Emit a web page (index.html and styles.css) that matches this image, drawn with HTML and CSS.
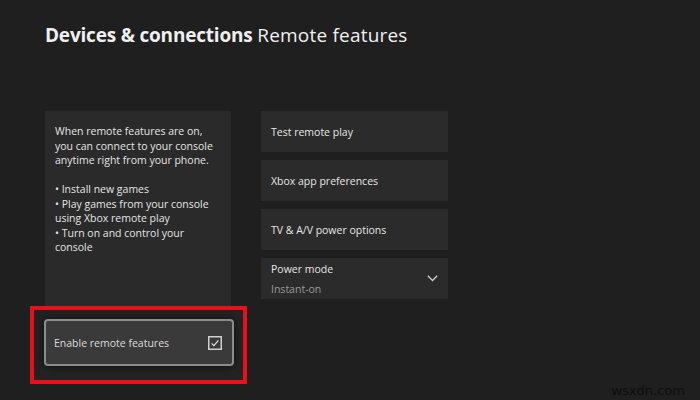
FILE: index.html
```html
<!DOCTYPE html>
<html>
<head>
<meta charset="utf-8">
<link rel="stylesheet" href="styles.css">
</head>
<body>
<div class="screen">
  <h1 class="title"><span class="title-main">Devices &amp; connections</span> <span class="title-sub">Remote features</span></h1>
  <div class="content">
    <div class="left">
      <div class="info">
        <p>When remote features are on, you can connect to your console anytime right from your phone.</p>
        <p class="gap">• Install new games<br>• Play games from your console using Xbox remote play<br>• Turn on and control your console</p>
      </div>
      <div class="highlight">
        <div class="enable">
          <span>Enable remote features</span>
          <span class="check">
            <svg width="14" height="14" viewBox="0 0 14 14"><rect x="0.75" y="0.75" width="12.5" height="12.5" fill="none" stroke="#cfcfcf" stroke-width="1.5"/><path d="M3.6 7.4 L5.9 9.6 L10.4 4.4" fill="none" stroke="#e0e0e0" stroke-width="1.3"/></svg>
          </span>
        </div>
      </div>
    </div>
    <div class="right">
      <div class="tile">Test remote play</div>
      <div class="tile">Xbox app preferences</div>
      <div class="tile">TV &amp; A/V power options</div>
      <div class="tile tile-select">
        <div class="sel-text">
          <div class="sel-label">Power mode</div>
          <div class="sel-value">Instant-on</div>
        </div>
        <svg class="chev" width="11" height="7" viewBox="0 0 11 7"><path d="M0.8 0.8 L5.5 5.5 L10.2 0.8" fill="none" stroke="#d0d0d0" stroke-width="1.3"/></svg>
      </div>
    </div>
  </div>
  <div class="watermark">wsxdn.com</div>
</div>
</body>
</html>
```
FILE: styles.css
```css
html, body {
  margin: 0;
  padding: 0;
  background: #1f1f1f;
}
.screen {
  width: 700px;
  height: 400px;
  overflow: hidden;
  position: relative;
  font-family: "Open Sans", "Noto Sans", sans-serif;
  color: #e6e6e6;
}
.title {
  margin: 25px 0 0 45px;
  font-size: 19px;
  line-height: 20px;
  font-weight: 400;
  color: #f0f0f0;
  letter-spacing: -0.2px;
}
.title-main {
  font-weight: 700;
}
.title-sub {
  letter-spacing: 0.2px;
}
.content {
  display: flex;
  gap: 30px;
  margin: 66px 0 0 45px;
}
.left {
  width: 186px;
  display: flex;
  flex-direction: column;
}
.info {
  background: #2a2a2a;
  height: 195px;
  padding: 13px 10px 0 10px;
  box-sizing: border-box;
  font-size: 10.5px;
  line-height: 14.5px;
  color: #e4e4e4;
}
.info p {
  margin: 0;
}
.info .gap {
  margin-top: 14.5px;
}
.highlight {
  margin: 0 -16px 0 -15px;
  border: 4px solid #e8101a;
  padding: 9px 9px 14px 10px;
  background: #232323;
}
.enable {
  height: 47px;
  box-sizing: border-box;
  border: 2px solid #8c8c8c;
  border-radius: 4px;
  background: #3a3a3a;
  display: flex;
  align-items: center;
  justify-content: space-between;
  padding: 0 10px 0 8px;
  font-size: 10.5px;
  color: #dcdcdc;
  box-shadow: 0 0 8px rgba(0,0,0,0.6);
}
.check {
  display: flex;
}
.right {
  width: 187px;
  display: flex;
  flex-direction: column;
  gap: 8px;
}
.tile {
  height: 41px;
  background: #2b2b2b;
  display: flex;
  align-items: center;
  padding: 0 10px;
  font-size: 10.5px;
  color: #e6e6e6;
}
.tile-select {
  justify-content: space-between;
  padding-right: 10px;
}
.sel-label {
  line-height: 20px;
  color: #e6e6e6;
}
.sel-value {
  line-height: 20px;
  color: #9a9a9a;
}
.chev {
  display: block;
}
.watermark {
  position: absolute;
  right: 15px;
  bottom: 2px;
  font-family: "DejaVu Sans", sans-serif;
  font-size: 13px;
  color: #0e0e0e;
}
```
